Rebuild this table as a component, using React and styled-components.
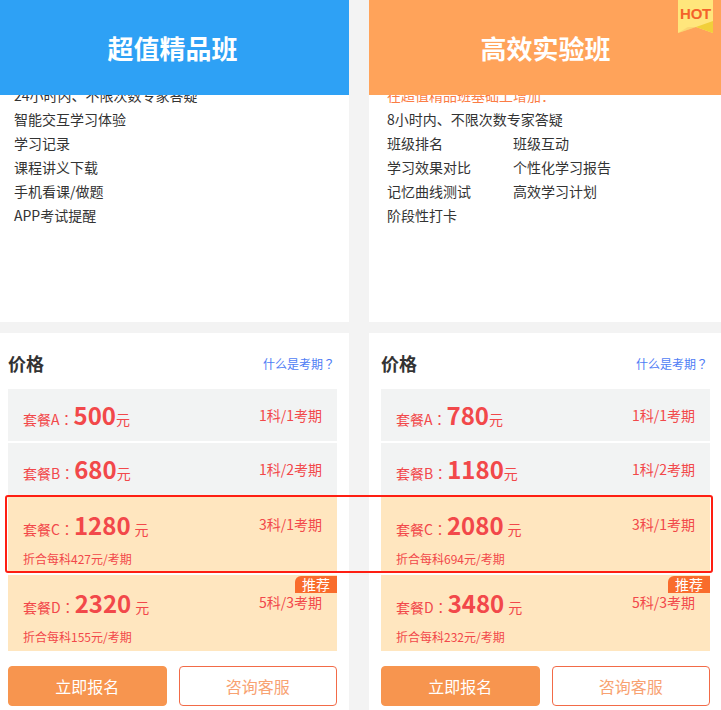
import React from "react";
import styled, { createGlobalStyle } from "styled-components";

const Global = createGlobalStyle`
  html, body { margin: 0; padding: 0; background: #f3f3f3; }
  body { font-family: "Noto Sans CJK SC", "Noto Sans", sans-serif; overflow: hidden; }
  #root { height: 710px; overflow: hidden; }
`;

const Page = styled.div`
  position: relative;
  display: flex;
  gap: 20px;
  margin-left: -4px;
  width: 726px;
  height: 710px;
`;

const Column = styled.div`
  width: 353px;
  flex: none;
  display: flex;
  flex-direction: column;
  gap: 11px;
`;

const FeatureCard = styled.div`
  position: relative;
  background: #fff;
  height: 322px;
  overflow: hidden;
  box-sizing: border-box;
  padding: 83px 18px 0;
`;

const Header = styled.div`
  position: absolute;
  left: 0;
  right: 0;
  top: 0;
  height: 95px;
  background: ${(p) => p.$bg};
  color: #fff;
  font-size: 26px;
  font-weight: 700;
  display: flex;
  align-items: center;
  justify-content: center;
  z-index: 2;
`;

const Hot = styled.div`
  position: absolute;
  top: 0;
  right: 9px;
  width: 35px;
  height: 34px;
`;

const HotText = styled.span`
  position: absolute;
  left: 0;
  right: 0;
  top: 4px;
  text-align: center;
  font-family: "Liberation Sans", Arial, sans-serif;
  font-weight: 700;
  font-size: 15px;
  line-height: 20px;
  color: #f4622a;
  letter-spacing: -0.3px;
`;

const Line = styled.div`
  font-size: 14px;
  line-height: 24px;
  color: ${(p) => (p.$accent ? "#fb7d45" : "#333")};
  white-space: nowrap;
`;

const Grid = styled.div`
  display: grid;
  grid-template-columns: 126px auto;
`;

const PriceCard = styled.div`
  position: relative;
  flex: 1;
  background: #fff;
  padding: 16px 12px 0;
`;

const TitleRow = styled.div`
  display: flex;
  justify-content: space-between;
  align-items: center;
  height: 28px;
  padding-right: 2px;
  margin-bottom: 12px;
`;

const Title = styled.div`
  font-size: 18px;
  font-weight: 700;
  color: #333;
`;

const Link = styled.a`
  font-size: 12px;
  color: #4f7df5;
  text-decoration: none;
`;

const Punct = styled.span`
  font-family: "Noto Sans CJK TC", "Noto Sans CJK SC", sans-serif;
`;

const List = styled.div`
  display: flex;
  flex-direction: column;
  gap: 2px;
`;

const Row = styled.div`
  position: relative;
  background: ${(p) => (p.$hl ? "#ffe6bf" : "#f2f3f3")};
  height: ${(p) => (p.$hl ? "76px" : "52px")};
  box-sizing: border-box;
  padding: ${(p) => (p.$hl ? "14px 15px 0" : "12px 15px 0")};
  color: #f2484a;
`;

const Main = styled.div`
  display: flex;
  align-items: center;
  justify-content: space-between;
  height: 28px;
`;

const Label = styled.div`
  display: flex;
  align-items: baseline;
  font-size: 14px;
`;

const Price = styled.span`
  font-size: 24px;
  font-weight: 700;
  line-height: 28px;
`;

const Unit = styled.span`
  font-size: 14px;
  margin-left: ${(p) => (p.$sp ? "4px" : "0")};
`;

const Term = styled.div`
  font-size: 14px;
  line-height: 18px;
  align-self: ${(p) => (p.$hl ? "flex-start" : "center")};
  margin-top: ${(p) => (p.$hl ? "4px" : "0")};
`;

const Sub = styled.div`
  font-size: 12px;
  line-height: 16px;
  margin-top: 12px;
`;

const Badge = styled.div`
  position: absolute;
  top: 1px;
  right: 0;
  width: 42px;
  height: 17px;
  background: #f96c2c;
  color: #fff;
  font-size: 14px;
  line-height: 17px;
  text-align: center;
  border-top-left-radius: 6px;
`;

const Buttons = styled.div`
  display: flex;
  gap: 12px;
  margin-top: 15px;
`;

const Button = styled.button`
  flex: 1;
  height: 40px;
  box-sizing: border-box;
  border-radius: 4px;
  font-family: inherit;
  font-size: 16px;
  padding: 0;
  cursor: pointer;
  background: ${(p) => (p.$primary ? "#f7954f" : "#fff")};
  color: ${(p) => (p.$primary ? "#fff" : "#f8a272")};
  border: 1px solid ${(p) => (p.$primary ? "#f7954f" : "#f26b48")};
`;

const Annotation = styled.div`
  position: absolute;
  left: 9px;
  top: 495px;
  width: 708px;
  height: 78px;
  box-sizing: border-box;
  border: 2px solid #fe1e12;
  border-radius: 3px;
  pointer-events: none;
  z-index: 5;
`;

const HotBadge = () => (
  <Hot>
    <svg width="35" height="34" viewBox="0 0 35 34">
      <polygon points="0,0 35,0 35,33 18,27 0,33" fill="#ffe67c" />
      <polygon points="18,27 35,21 35,33" fill="#f1cf3a" />
      <polygon points="0,33 18,27 10,27" fill="#f5c66a" opacity="0.5" />
    </svg>
    <HotText>HOT</HotText>
  </Hot>
);

const plans = [
  {
    header: "超值精品班",
    bg: "#2ea1f5",
    rows: [
      { k: "A", p: "500", t: "1科/1考期" },
      { k: "B", p: "680", t: "1科/2考期" },
      { k: "C", p: "1280", t: "3科/1考期", s: "折合每科427元/考期" },
      { k: "D", p: "2320", t: "5科/3考期", s: "折合每科155元/考期", badge: true },
    ],
  },
  {
    header: "高效实验班",
    bg: "#ffa35a",
    hot: true,
    rows: [
      { k: "A", p: "780", t: "1科/1考期" },
      { k: "B", p: "1180", t: "1科/2考期" },
      { k: "C", p: "2080", t: "3科/1考期", s: "折合每科694元/考期" },
      { k: "D", p: "3480", t: "5科/3考期", s: "折合每科232元/考期", badge: true },
    ],
  },
];

const LeftFeatures = () => (
  <>
    <Line>24小时内、不限次数专家答疑</Line>
    <Line>智能交互学习体验</Line>
    <Line>学习记录</Line>
    <Line>课程讲义下载</Line>
    <Line>手机看课/做题</Line>
    <Line>APP考试提醒</Line>
  </>
);

const RightFeatures = () => (
  <>
    <Line $accent>在超值精品班基础上增加：</Line>
    <Line>8小时内、不限次数专家答疑</Line>
    <Grid>
      <Line>班级排名</Line>
      <Line>班级互动</Line>
      <Line>学习效果对比</Line>
      <Line>个性化学习报告</Line>
      <Line>记忆曲线测试</Line>
      <Line>高效学习计划</Line>
      <Line>阶段性打卡</Line>
    </Grid>
  </>
);

export default function App() {
  return (
    <>
      <Global />
      <Page>
        {plans.map((plan, i) => (
          <Column key={plan.header}>
            <FeatureCard>
              <Header $bg={plan.bg}>
                {plan.header}
                {plan.hot && <HotBadge />}
              </Header>
              {i === 0 ? <LeftFeatures /> : <RightFeatures />}
            </FeatureCard>
            <PriceCard>
              <TitleRow>
                <Title>价格</Title>
                <Link href="#">
                  什么是考期<Punct>？</Punct>
                </Link>
              </TitleRow>
              <List>
                {plan.rows.map((r) => {
                  const hl = !!r.s;
                  return (
                    <Row key={r.k} $hl={hl}>
                      {r.badge && <Badge>推荐</Badge>}
                      <Main>
                        <Label>
                          套餐{r.k}
                          <Punct>：</Punct>
                          <Price>{r.p}</Price>
                          <Unit $sp={hl}>元</Unit>
                        </Label>
                        <Term $hl={hl}>{r.t}</Term>
                      </Main>
                      {hl && <Sub>{r.s}</Sub>}
                    </Row>
                  );
                })}
              </List>
              <Buttons>
                <Button $primary>立即报名</Button>
                <Button>咨询客服</Button>
              </Buttons>
            </PriceCard>
          </Column>
        ))}
        <Annotation />
      </Page>
    </>
  );
}
